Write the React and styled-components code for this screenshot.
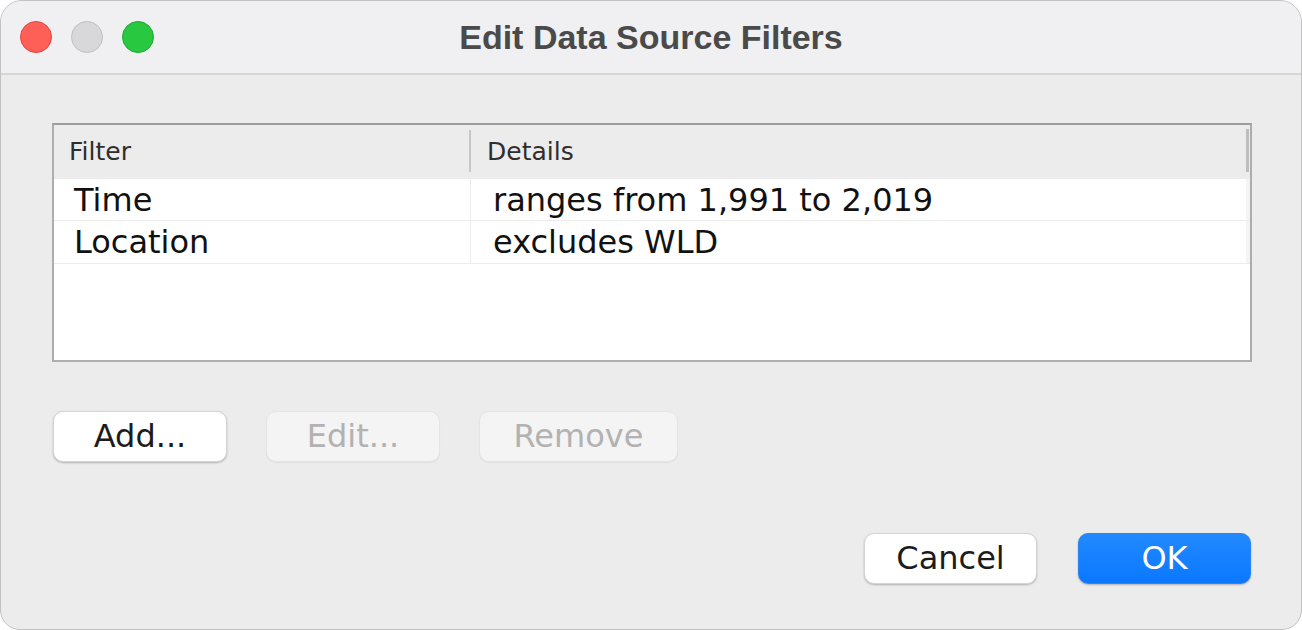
import React from 'react';
import styled, { createGlobalStyle } from 'styled-components';

const GlobalStyle = createGlobalStyle`
  html, body {
    margin: 0;
    padding: 0;
    background: #ffffff;
  }
  * {
    box-sizing: border-box;
  }
`;

const filters = [
  { name: 'Time', details: 'ranges from 1,991 to 2,019' },
  { name: 'Location', details: 'excludes WLD' },
];

const Window = styled.div`
  width: 1302px;
  height: 630px;
  display: flex;
  flex-direction: column;
  background: #ececec;
  border: 1px solid #c2c2c2;
  border-radius: 22px 22px 20px 20px;
  overflow: hidden;
  font-family: "DejaVu Sans", sans-serif;
`;

const TitleBar = styled.div`
  position: relative;
  height: 74px;
  flex-shrink: 0;
  display: flex;
  align-items: center;
  justify-content: center;
  background: #f0f0f2;
  border-bottom: 2px solid #d6d6d6;
`;

const Lights = styled.div`
  position: absolute;
  left: 19px;
  top: 20px;
  display: flex;
  gap: 19px;
`;

const Light = styled.span`
  width: 32px;
  height: 32px;
  border-radius: 50%;
  background: ${p => p.$fill};
  border: 1px solid ${p => p.$edge};
`;

const Title = styled.h1`
  margin: 0;
  font-family: "Liberation Sans", Arial, sans-serif;
  font-weight: 700;
  font-size: 34px;
  line-height: 72px;
  color: #4a4a4a;
`;

const Content = styled.div`
  flex: 1;
  display: flex;
  flex-direction: column;
  padding: 48px 49px 0 51px;
`;

const Table = styled.div`
  height: 239px;
  background: #ffffff;
  border: 2px solid #adadad;
  border-top-color: #9c9c9c;
  display: grid;
  grid-template-columns: 417px 1fr 4px;
  grid-template-rows: 54px 42px 43px 1fr;
`;

const HeadCell = styled.div`
  position: relative;
  background: #ececec;
  padding-left: ${p => p.$pad}px;
  font-size: 25px;
  line-height: 54px;
  color: #2e2e2e;

  ${p => p.$divider && `
    &::after {
      content: '';
      position: absolute;
      right: 0;
      top: 5px;
      bottom: 7px;
      width: 2px;
      background: #c6c6c6;
    }
  `}
`;

const ScrollEdge = styled.div`
  background: ${p => (p.$head ? '#ececec' : '#f4f4f4')};
  padding: ${p => (p.$head ? '4px 1px 7px 0' : '0')};
  border-bottom: ${p => (p.$head ? 'none' : '1px solid #ececec')};

  &::before {
    content: '';
    display: ${p => (p.$head ? 'block' : 'none')};
    height: 100%;
    background: #bdbdbd;
  }
`;

const Cell = styled.div`
  padding: 2px 0 0 ${p => p.$pad}px;
  font-size: 32px;
  line-height: 39px;
  color: #111111;
  border-bottom: 1px solid #ececec;
  border-right: ${p => (p.$first ? '1px solid #ececec' : 'none')};
  white-space: nowrap;
`;

const ButtonRow = styled.div`
  display: flex;
  gap: 39px;
  margin-top: 49px;
  padding-left: 1px;
`;

const Footer = styled.div`
  display: flex;
  justify-content: flex-end;
  gap: 41px;
  margin-top: 71px;
  padding-right: 1px;
`;

const Button = styled.button`
  width: ${p => p.$w || 174}px;
  height: 51px;
  padding: 0;
  border-radius: 10px;
  font-family: "DejaVu Sans", sans-serif;
  font-size: 32px;
  line-height: 49px;
  cursor: default;
  background: ${p => (p.$primary ? 'linear-gradient(#2289ff, #0a78ff)' : p.disabled ? '#f4f4f4' : '#ffffff')};
  color: ${p => (p.$primary ? '#ffffff' : p.disabled ? '#b2b2b2' : '#1c1c1c')};
  border: 1px solid ${p => (p.$primary ? '#2a84f5' : p.disabled ? '#e4e4e4' : '#d4d4d4')};
  box-shadow: ${p => (p.disabled ? '0 1px 1px rgba(0,0,0,0.06)' : '0 1px 2px rgba(0,0,0,0.25)')};
`;

export default function App() {
  return (
    <>
      <GlobalStyle />
      <Window>
        <TitleBar>
          <Lights>
            <Light $fill="#fe5f57" $edge="#e2463f" />
            <Light $fill="#d8d8da" $edge="#bfbfc1" />
            <Light $fill="#28c840" $edge="#1eaa2f" />
          </Lights>
          <Title>Edit Data Source Filters</Title>
        </TitleBar>
        <Content>
          <Table>
            <HeadCell $pad={15} $divider>Filter</HeadCell>
            <HeadCell $pad={16}>Details</HeadCell>
            <ScrollEdge $head />
            {filters.map(f => (
              <React.Fragment key={f.name}>
                <Cell $pad={20} $first>{f.name}</Cell>
                <Cell $pad={22}>{f.details}</Cell>
                <ScrollEdge />
              </React.Fragment>
            ))}
          </Table>
          <ButtonRow>
            <Button>Add...</Button>
            <Button disabled>Edit...</Button>
            <Button disabled $w={199}>Remove</Button>
          </ButtonRow>
          <Footer>
            <Button $w={173}>Cancel</Button>
            <Button $primary $w={173}>OK</Button>
          </Footer>
        </Content>
      </Window>
    </>
  );
}
